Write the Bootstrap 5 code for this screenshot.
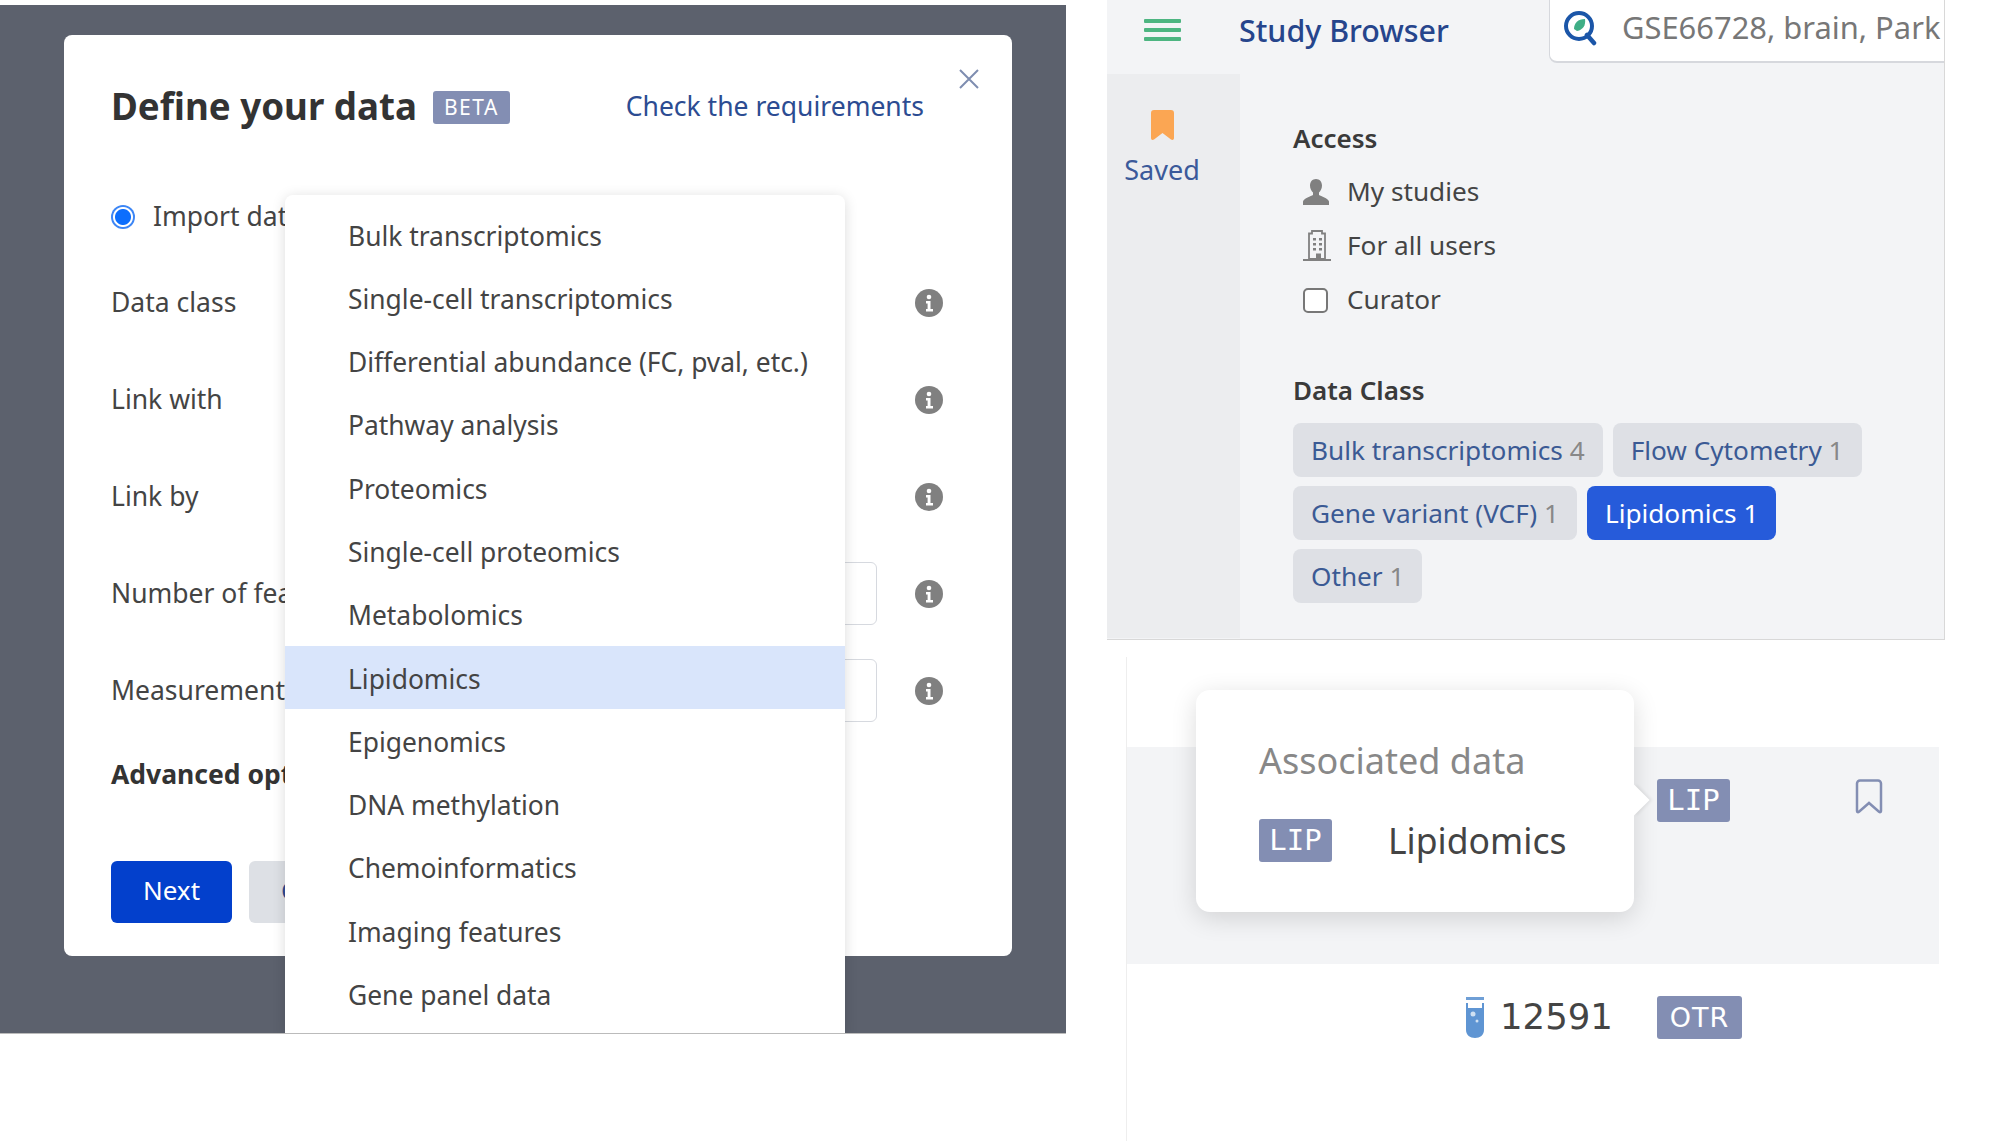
<!DOCTYPE html>
<html lang="en">
<head>
    <meta charset="UTF-8">
    <meta name="viewport" content="width=device-width, initial-scale=1.0">
    <title>Define your data</title>
    <link href="https://cdn.jsdelivr.net/npm/bootstrap@5.3.0/dist/css/bootstrap.min.css" rel="stylesheet">
    <style>
        body { background: #fff; font-family: "Noto Sans", sans-serif; color: #444; font-size: 26.5px; overflow: hidden; }
        .shot-left { width: 1066px; height: 1029px; margin-top: 5px; background: #5c616d; overflow: hidden; flex: none; padding: 30px 0 0 64px; border-bottom: 1px solid #bbb; }
        .shot-right { width: 838px; margin-left: 41px; flex: none; }
        .data-modal { position: relative; width: 948px; height: 921px; background: #fff; border-radius: 8px; padding: 42px 0 0 47px; }
        .title-row { height: 60px; width: 813px; }
        .title-text { font-size: 36.7px; font-weight: 700; color: #333; }
        .beta-tag { background: #838eb3; color: #fff; font-size: 21px; letter-spacing: 1.5px; border-radius: 3px; width: 77px; height: 33px; line-height: 33px; text-align: center; margin-left: 16px; }
        .req-link { color: #2c4c92; text-decoration: none; font-size: 26.5px; margin-left: auto; }
        .close-x { position: absolute; top: 34px; left: 895px; }
        .radio-row { height: 40px; margin-top: 60px; margin-bottom: 17px; }
        .radio-row .form-check-input { width: 24px; height: 24px; margin: 0 18px 0 0; border: 0; background: radial-gradient(circle, #0d6efd 0 7.5px, #fff 8.5px 9.5px, #3d86f5 10.5px); }
        .form-line { height: 97px; width: 832px; }
        .line-label { width: 190px; flex: none; white-space: nowrap; }
        .line-input { height: 63px; flex-grow: 1; border-radius: 6px; border: 1.5px solid #d6d9df; margin-right: 38px; }
        .line-gap { flex-grow: 1; margin-right: 38px; }
        .adv-line { height: 40px; margin-top: 16px; font-weight: 700; color: #333; }
        .btn-row { margin-top: 66px; }
        .btn-next { background: #0340cc; color: #fff; width: 121px; height: 62px; font-size: 26px; border-radius: 6px; margin-right: 17px; padding: 0 0 3px; border: 0; }
        .btn-cancel { background: #dde0e5; color: #2c4c92; width: 150px; height: 62px; font-size: 26px; border-radius: 6px; padding: 0 0 3px 32px; border: 0; text-align: left; }
        .class-menu { position: absolute; display: block; top: 160px; left: 221px; width: 560px; height: 839px; border: 0; border-radius: 8px 8px 0 0; padding: 7.5px 0 0; box-shadow: 0 2px 14px rgba(0,0,0,.14); font-size: 26.4px; }
        .class-menu .dropdown-item { height: 63.3px; line-height: 60.3px; padding: 3px 0 0 63px; color: #444; }
        .class-menu .dropdown-item.active { background: #d9e5fb; color: #444; }

        .browser-panel { height: 640px; background: #f3f4f6; border-right: 1.5px solid #d8d8d8; border-bottom: 1.5px solid #d8d8d8; }
        .browser-head { height: 74px; }
        .burger-wrap { width: 133px; flex: none; padding-top: 19px; padding-left: 37px; }
        .burger-bar { width: 37px; height: 4px; background: #4db581; margin-bottom: 5px; border-radius: 1px; }
        .head-title { color: #26458c; font-size: 30.4px; font-weight: 500; padding-top: 8px; margin-left: -1px; }
        .search-box { width: 395px; height: 63px; margin-left: auto; background: #fff; border-left: 1.5px solid #d6d8dd; border-bottom: 2.5px solid #d6d8dd; border-bottom-left-radius: 8px; padding: 0 0 6px 13px; overflow: hidden; white-space: nowrap; color: #777; font-size: 30.9px; }
        .search-text { margin-left: 24px; }
        .browser-body { height: 564px; }
        .saved-col { width: 133px; flex: none; background: #ecedef; padding: 28px 23px 0 0; text-align: center; color: #3b5a9a; font-size: 27px; }
        .saved-label { margin-top: 7px; line-height: 40px; }
        .filter-col { padding: 48px 0 0 53px; font-size: 26.2px; }
        .filter-head { line-height: 32px; font-weight: 600; color: #3a3a3a; font-size: 26px; }
        .access-head { margin-bottom: 11px; }
        .data-head { margin: 47px 0 17px; }
        .filter-row { height: 54px; }
        .filter-icon { width: 54px; flex: none; padding-left: 9px; }
        .filter-icon .form-check-input { width: 25px; height: 25px; margin: 0 0 0 1px; border: 2.5px solid #777; border-radius: 5px; display: block; }
        .chip-wrap { gap: 9px 10px; width: 600px; }
        .data-chip { height: 54px; line-height: 54px; padding: 0 18px; border-radius: 8px; background: #dee0e5; color: #3b5a94; white-space: nowrap; }
        .data-chip span { color: #888; }
        .data-chip.on { background: #265bda; color: #fff; }
        .data-chip.on span { color: #fff; }

        .table-panel { position: relative; height: 484px; width: 813px; margin: 17px 0 0 19px; border-left: 1.5px solid #eee; }
        .table-gap { height: 90px; }
        .table-band { height: 217px; background: #f3f4f6; padding: 32px 0 0 530px; }
        .table-bottom { padding: 26px 0 0 338px; }
        .code-tag { background: #838eb3; color: #fff; font-family: "DejaVu Sans Mono", monospace; font-size: 29px; border-radius: 3px; height: 43px; line-height: 43px; text-align: center; flex: none; }
        .tag-lip { width: 73px; }
        .tag-otr { width: 85px; font-family: "DejaVu Sans", sans-serif; font-size: 27px; letter-spacing: 1px; }
        .mark-icon { margin-left: 125px; }
        .count-num { font-family: "DejaVu Sans", sans-serif; font-size: 35.5px; color: #444; width: 172px; padding: 0 0 2px 15px; }
        .assoc-pop { position: absolute; top: 33px; left: 69px; width: 438px; height: 222px; background: #fff; border-radius: 14px; box-shadow: 0 6px 26px rgba(0,0,0,.14); padding: 46px 0 0 63px; }
        .assoc-pop::after { content: ""; position: absolute; left: 427px; top: 99px; width: 22px; height: 22px; background: #fff; transform: rotate(45deg); box-shadow: 2px -2px 3px rgba(0,0,0,.06); }
        .assoc-title { color: #888; font-size: 36px; line-height: 50px; }
        .assoc-item { margin-top: 28px; color: #444; font-size: 35.5px; }
        .assoc-item .code-tag { margin-right: 56px; }
    </style>
</head>
<body>
    <div class="d-flex">
        <div class="shot-left">
            <div class="data-modal">
                <div class="title-row d-flex align-items-center">
                    <span class="title-text">Define your data</span>
                    <span class="beta-tag">BETA</span>
                    <a href="#" class="req-link">Check the requirements</a>
                </div>
                <svg class="close-x" width="20" height="20" viewBox="0 0 20 20"><path d="M1 1 19 19M19 1 1 19" stroke="#7e8db0" stroke-width="2"/></svg>

                <div class="radio-row d-flex align-items-center">
                    <input class="form-check-input" type="radio" checked>
                    <span>Import data</span>
                </div>

                <div class="form-line d-flex align-items-center">
                    <div class="line-label">Data class</div>
                    <div class="line-gap"></div>
                    <svg width="28" height="28" viewBox="0 0 28 28"><circle cx="14" cy="14" r="14" fill="#808080"/><circle cx="14" cy="8" r="2.3" fill="#fff"/><path d="M11 12h4.5v8H18v2.5h-7V20h1.6v-5.5H11z" fill="#fff"/></svg>
                </div>
                <div class="form-line d-flex align-items-center">
                    <div class="line-label">Link with</div>
                    <div class="line-gap"></div>
                    <svg width="28" height="28" viewBox="0 0 28 28"><circle cx="14" cy="14" r="14" fill="#808080"/><circle cx="14" cy="8" r="2.3" fill="#fff"/><path d="M11 12h4.5v8H18v2.5h-7V20h1.6v-5.5H11z" fill="#fff"/></svg>
                </div>
                <div class="form-line d-flex align-items-center">
                    <div class="line-label">Link by</div>
                    <div class="line-gap"></div>
                    <svg width="28" height="28" viewBox="0 0 28 28"><circle cx="14" cy="14" r="14" fill="#808080"/><circle cx="14" cy="8" r="2.3" fill="#fff"/><path d="M11 12h4.5v8H18v2.5h-7V20h1.6v-5.5H11z" fill="#fff"/></svg>
                </div>
                <div class="form-line d-flex align-items-center">
                    <div class="line-label">Number of features</div>
                    <div class="line-input"></div>
                    <svg width="28" height="28" viewBox="0 0 28 28"><circle cx="14" cy="14" r="14" fill="#808080"/><circle cx="14" cy="8" r="2.3" fill="#fff"/><path d="M11 12h4.5v8H18v2.5h-7V20h1.6v-5.5H11z" fill="#fff"/></svg>
                </div>
                <div class="form-line d-flex align-items-center">
                    <div class="line-label">Measurement</div>
                    <div class="line-input"></div>
                    <svg width="28" height="28" viewBox="0 0 28 28"><circle cx="14" cy="14" r="14" fill="#808080"/><circle cx="14" cy="8" r="2.3" fill="#fff"/><path d="M11 12h4.5v8H18v2.5h-7V20h1.6v-5.5H11z" fill="#fff"/></svg>
                </div>

                <div class="adv-line d-flex align-items-center">Advanced options</div>
                <div class="btn-row d-flex">
                    <button class="btn btn-next">Next</button>
                    <button class="btn btn-cancel">Cancel</button>
                </div>

                <div class="dropdown-menu class-menu">
                    <a class="dropdown-item" href="#">Bulk transcriptomics</a>
                    <a class="dropdown-item" href="#">Single-cell transcriptomics</a>
                    <a class="dropdown-item" href="#">Differential abundance (FC, pval, etc.)</a>
                    <a class="dropdown-item" href="#">Pathway analysis</a>
                    <a class="dropdown-item" href="#">Proteomics</a>
                    <a class="dropdown-item" href="#">Single-cell proteomics</a>
                    <a class="dropdown-item" href="#">Metabolomics</a>
                    <a class="dropdown-item active" href="#">Lipidomics</a>
                    <a class="dropdown-item" href="#">Epigenomics</a>
                    <a class="dropdown-item" href="#">DNA methylation</a>
                    <a class="dropdown-item" href="#">Chemoinformatics</a>
                    <a class="dropdown-item" href="#">Imaging features</a>
                    <a class="dropdown-item" href="#">Gene panel data</a>
                </div>
            </div>
        </div>

        <div class="shot-right">
            <div class="browser-panel">
                <div class="browser-head d-flex">
                    <div class="burger-wrap">
                        <div class="burger-bar"></div>
                        <div class="burger-bar"></div>
                        <div class="burger-bar"></div>
                    </div>
                    <div class="head-title">Study Browser</div>
                    <div class="search-box d-flex align-items-center">
                        <svg width="35" height="36" viewBox="0 0 35 36" class="flex-shrink-0"><circle cx="16" cy="16" r="13" fill="#fff" stroke="#1b56a8" stroke-width="4"/><path d="M11 19c0-6 4-10 11-10 1 6-2 11-8 12z" fill="#3fae86"/><path d="M24 25l7 8" stroke="#1b56a8" stroke-width="4.5" stroke-linecap="round"/></svg>
                        <span class="search-text">GSE66728, brain, Park</span>
                    </div>
                </div>
                <div class="browser-body d-flex">
                    <div class="saved-col">
                        <svg width="23" height="30" viewBox="0 0 23 30"><path d="M3 0h17a3 3 0 0 1 3 3v25c0 2-1.600 2.500-3 1.500L11.500 23 3 29.500C1.600 30.500 0 30 0 28V3a3 3 0 0 1 3-3z" fill="#fba653"/></svg>
                        <div class="saved-label">Saved</div>
                    </div>
                    <div class="filter-col">
                        <div class="filter-head access-head">Access</div>
                        <div class="filter-row d-flex align-items-center">
                            <div class="filter-icon">
                                <svg width="28" height="28" viewBox="0 0 28 28" class="d-block"><path d="M14 1c3.600 0 6 2.800 6 6.500 0 3-1.400 5.500-3 7v2.500c2 1.300 9 3 10 6.500v3.500H1V23.500c1-3.500 8-5.200 10-6.500v-2.500c-1.600-1.500-3-4-3-7C8 3.800 10.400 1 14 1z" fill="#808080"/></svg>
                            </div>
                            <span>My studies</span>
                        </div>
                        <div class="filter-row d-flex align-items-center">
                            <div class="filter-icon">
                                <svg width="30" height="32" viewBox="0 0 30 32" class="d-block"><path d="M10 1h10v2.500h3V29H7V3.500h3z" fill="none" stroke="#808080" stroke-width="1.800"/><path d="M11 8h3v2.500h-3zM17 8h3v2.500h-3zM11 13h3v2.500h-3zM17 13h3v2.500h-3zM11 18h3v2.500h-3zM17 18h3v2.500h-3zM14 23.500h5V29h-5z" fill="#808080"/><path d="M1 30h28" stroke="#808080" stroke-width="2"/></svg>
                            </div>
                            <span>For all users</span>
                        </div>
                        <div class="filter-row d-flex align-items-center">
                            <div class="filter-icon">
                                <input class="form-check-input" type="checkbox">
                            </div>
                            <span>Curator</span>
                        </div>
                        <div class="filter-head data-head">Data Class</div>
                        <div class="chip-wrap d-flex flex-wrap">
                            <div class="data-chip">Bulk transcriptomics <span>4</span></div>
                            <div class="data-chip">Flow Cytometry <span>1</span></div>
                            <div class="data-chip">Gene variant (VCF) <span>1</span></div>
                            <div class="data-chip on">Lipidomics <span>1</span></div>
                            <div class="data-chip">Other <span>1</span></div>
                        </div>
                    </div>
                </div>
            </div>

            <div class="table-panel">
                <div class="table-gap"></div>
                <div class="table-band d-flex align-items-start">
                    <div class="code-tag tag-lip">LIP</div>
                    <svg class="mark-icon" width="28" height="35" viewBox="0 0 28 35"><path d="M5 1.500h18a3 3 0 0 1 3 3V32c0 1.200-1 1.500-2 .8L14 24 4 32.800c-1 .7-2 .4-2-.8V4.500a3 3 0 0 1 3-3z" fill="none" stroke="#838eb3" stroke-width="2.500"/></svg>
                </div>
                <div class="table-bottom d-flex align-items-center">
                    <svg width="20" height="41" viewBox="0 0 20 41" class="flex-shrink-0"><path d="M1 0h18v3H1z" fill="#6f9fd6"/><path d="M1 6h18v27c0 5-4 8-9 8s-9-3-9-8z" fill="#5f95d3"/><path d="M3 6h14v5H3z" fill="#fff"/><circle cx="8" cy="17" r="2.500" fill="#cfe0f2"/><circle cx="12" cy="24" r="1.500" fill="#cfe0f2"/></svg>
                    <div class="count-num">12591</div>
                    <div class="code-tag tag-otr">OTR</div>
                </div>
                <div class="assoc-pop">
                    <div class="assoc-title">Associated data</div>
                    <div class="assoc-item d-flex align-items-center">
                        <div class="code-tag tag-lip">LIP</div>
                        <span>Lipidomics</span>
                    </div>
                </div>
            </div>
        </div>
    </div>
</body>
</html>
